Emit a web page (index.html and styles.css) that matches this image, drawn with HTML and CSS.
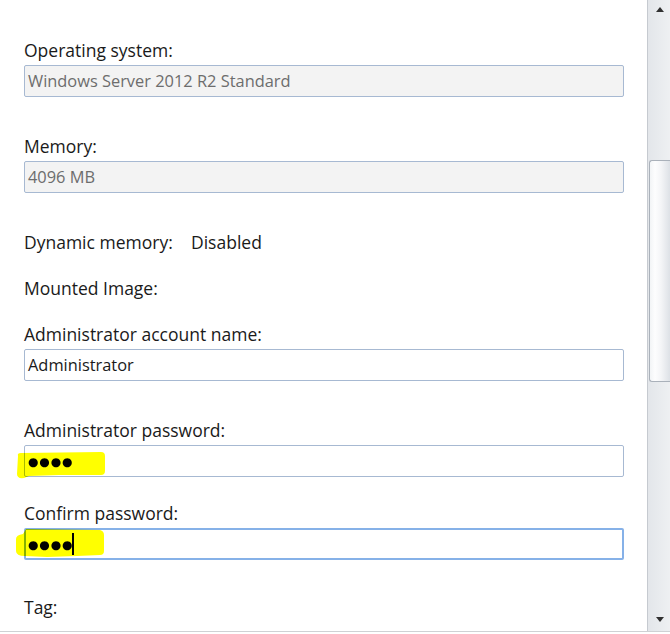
FILE: index.html
```html
<!DOCTYPE html>
<html lang="en">
<head>
<meta charset="utf-8">
<title>VM settings</title>
<link rel="stylesheet" href="styles.css">
</head>
<body>
<div class="window">
  <main class="content">
    <div class="field gap-lg">
      <label class="label">Operating system:</label>
      <div class="input disabled">Windows Server 2012 R2 Standard</div>
    </div>
    <div class="field gap-lg">
      <label class="label">Memory:</label>
      <div class="input disabled">4096 MB</div>
    </div>
    <div class="row gap-md">
      <span class="row-key">Dynamic memory:</span>
      <span class="row-value">Disabled</span>
    </div>
    <div class="row gap-md">
      <span class="row-key">Mounted Image:</span>
    </div>
    <div class="field gap-lg">
      <label class="label">Administrator account name:</label>
      <div class="input">Administrator</div>
    </div>
    <div class="field gap-md">
      <label class="label">Administrator password:</label>
      <div class="input secret">
        <svg class="marker marker-1" width="92" height="28" viewBox="0 0 92 28"><path d="M3,5 Q2,2 6,2 L86,1 Q90,1 90,5 L90,20 Q90,24 86,24 L44,24 L14,25 L9,27 Q2,28 2,23 Z" fill="#ffff00"/></svg>
        <span class="dots">●●●●</span>
      </div>
    </div>
    <div class="field gap-last">
      <label class="label">Confirm password:</label>
      <div class="input secret focused">
        <svg class="marker marker-2" width="92" height="30" viewBox="0 0 92 30"><path d="M11,1 L85,2 Q89,3 89,7 L89,23 Q89,27 85,27 L62,28 L32,29 L10,28 Q1,28 1,23 L1,11 Q1,7 8,6 Z" fill="#ffff00"/></svg>
        <span class="dots">●●●●</span><span class="caret"></span>
      </div>
    </div>
    <div class="row">
      <span class="row-key">Tag:</span>
    </div>
  </main>
  <div class="scrollbar">
    <span class="arrow up"></span>
    <div class="thumb"></div>
    <div class="track-rest"></div>
    <span class="arrow down"></span>
  </div>
</div>
</body>
</html>
```

FILE: styles.css
```css
html, body {
  margin: 0;
  padding: 0;
  background: #ffffff;
}

body {
  font-family: "Open Sans", "Noto Sans", "DejaVu Sans", sans-serif;
  font-size: 17.5px;
  line-height: 20px;
  color: #1a1a1a;
}

.window {
  display: flex;
  height: 631px;
  border-bottom: 1px solid #cfd1d4;
  overflow: hidden;
}

.content {
  flex: 1;
  padding: 40px 0 0 24px;
  display: flex;
  flex-direction: column;
  overflow: hidden;
}

.field {
  display: flex;
  flex-direction: column;
  gap: 5px;
  width: 600px;
}

.gap-lg { margin-bottom: 39px; }
.gap-md { margin-bottom: 26px; }
.gap-last { margin-bottom: 37px; }

.label {
  display: block;
  height: 20px;
}

.input {
  position: relative;
  box-sizing: border-box;
  height: 32px;
  border: 1px solid #a7b9d2;
  border-radius: 2px;
  background: #ffffff;
  padding: 0 3px;
  display: flex;
  align-items: center;
  color: #1a1a1a;
  font-size: 16.4px;
  white-space: nowrap;
}

.input.disabled {
  background: #f3f3f3;
  color: #6d6d6d;
}

.input.focused {
  border: 2px solid #86b1e8;
  padding: 0 2px;
}

.secret {
  isolation: isolate;
}

.marker {
  position: absolute;
  mix-blend-mode: multiply;
  pointer-events: none;
}

.marker-1 {
  left: -10px;
  top: 5px;
}

.marker-2 {
  left: -11px;
  top: -2px;
}

.dots {
  position: relative;
  font-family: "DejaVu Sans", sans-serif;
  font-size: 12px;
  letter-spacing: 0.9px;
  color: #000000;
  margin-top: 2px;
}

.caret {
  position: relative;
  display: inline-block;
  width: 2px;
  height: 22px;
  background: #000000;
  margin-left: -1px;
}

.row {
  display: flex;
  height: 20px;
}

.row-key {
  width: 167px;
}

.scrollbar {
  width: 22px;
  border-left: 1px solid #c6cad0;
  background: linear-gradient(to right, #e3e6ea, #eef0f2);
  display: flex;
  flex-direction: column;
  align-items: flex-end;
}

.arrow {
  display: block;
  width: 0;
  height: 0;
  border-left: 4px solid transparent;
  border-right: 4px solid transparent;
  align-self: center;
  margin-left: 2px;
}

.arrow.up {
  border-bottom: 5px solid #303030;
  margin-top: 7px;
  margin-bottom: 148px;
}

.arrow.down {
  border-top: 5px solid #303030;
  margin-bottom: 9px;
}

.thumb {
  box-sizing: border-box;
  width: 21px;
  height: 222px;
  border: 1px solid #aab1ba;
  border-right: none;
  border-radius: 3px 0 0 3px;
  background: linear-gradient(to right, #f2f4f6, #fdfdfe 25%, #f4f5f7 55%, #dde1e6);
}

.track-rest {
  flex: 1;
}
```
